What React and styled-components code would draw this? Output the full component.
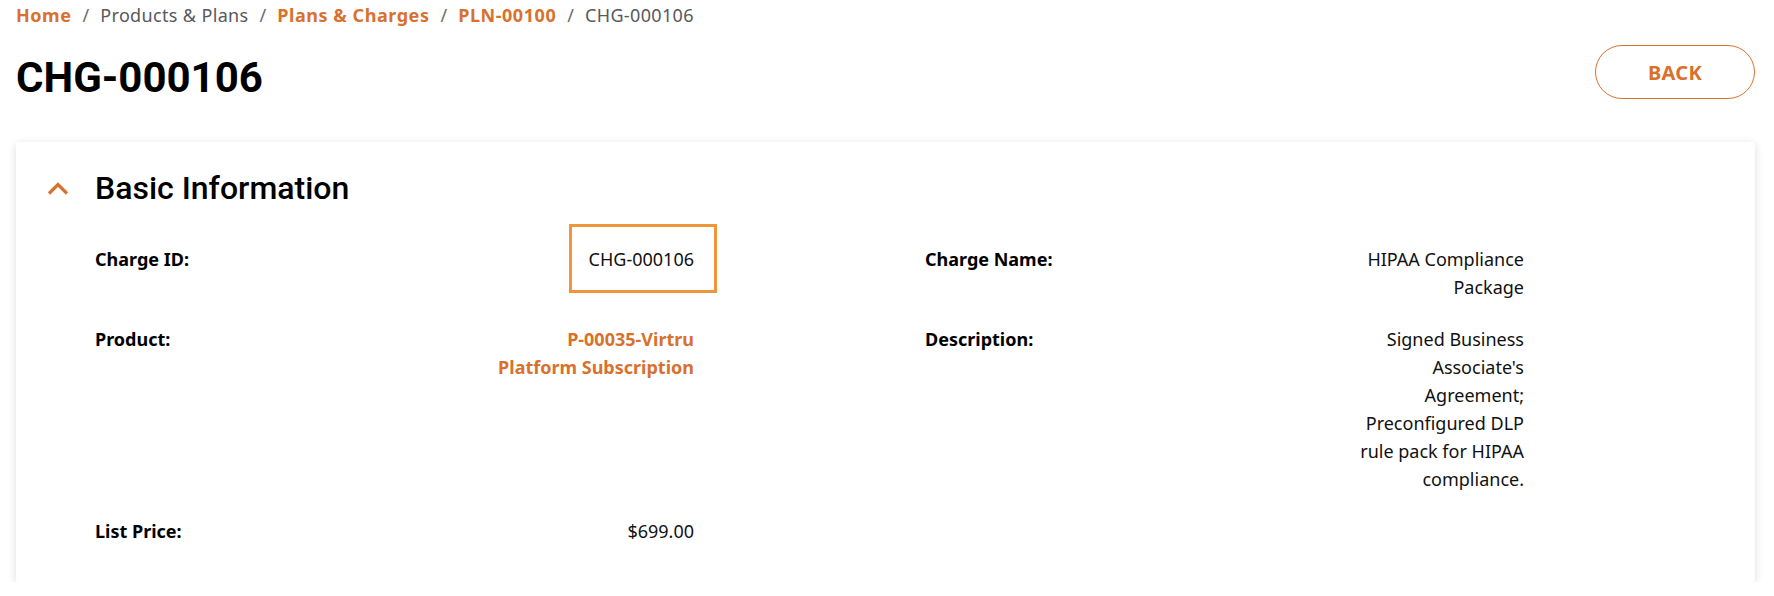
import styled, { createGlobalStyle } from 'styled-components';

const GlobalStyle = createGlobalStyle`
  body {
    margin: 0;
    background: #fff;
    font-family: 'Noto Sans', 'Open Sans', sans-serif;
    color: #111;
  }
`;

const Page = styled.div`
  padding: 1px 19px 0 16px;
`;

const Crumbs = styled.nav`
  display: flex;
  align-items: center;
  font-size: 18px;
  line-height: 28px;
  color: #58595b;
`;

const Crumb = styled.span`
  color: ${props => (props.link ? '#d9712e' : '#58595b')};
  font-weight: ${props => (props.link ? 700 : 400)};
  letter-spacing: ${props => (props.link ? '0.55px' : '0.35px')};
`;

const Sep = styled.span`
  margin: 0 11px;
  color: #6b6b6b;
`;

const TopRow = styled.div`
  display: flex;
  justify-content: space-between;
  align-items: flex-start;
  margin-top: 16px;
`;

const Title = styled.h1`
  margin: 8px 0 0;
  font-family: Roboto, sans-serif;
  font-size: 42px;
  font-weight: 700;
  line-height: normal;
  color: #000;
`;

const BackButton = styled.button`
  width: 160px;
  height: 54px;
  border: 1px solid #d9712e;
  border-radius: 27px;
  background: #fff;
  color: #d9712e;
  font-family: 'Noto Sans', sans-serif;
  font-size: 20px;
  font-weight: 700;
  letter-spacing: 0.3px;
  cursor: pointer;
`;

const Card = styled.section`
  margin-top: 40px;
  padding: 26px 0 37px;
  background: #fff;
  border-radius: 2px;
  box-shadow: 0 2px 8px rgba(0, 0, 0, 0.14);
`;

const SectionHead = styled.div`
  display: flex;
  align-items: center;
  gap: 17px;
  padding-left: 22px;
`;

const SectionTitle = styled.h2`
  margin: 0;
  font-family: Roboto, sans-serif;
  font-size: 32px;
  font-weight: 500;
  line-height: normal;
  color: #000;
`;

const Fields = styled.div`
  display: grid;
  grid-template-columns: 1fr 1fr;
  row-gap: 24px;
  margin-top: 37px;
  padding-left: 79px;
`;

const Field = styled.div`
  display: grid;
  grid-template-columns: 1fr ${props => props.valueWidth}px;
  padding-right: 231px;
  font-size: 18px;
  line-height: 28px;
`;

const Label = styled.div`
  font-weight: 700;
  color: #000;
`;

const Value = styled.div`
  text-align: right;
  color: ${props => (props.link ? '#d9712e' : '#111')};
  font-weight: ${props => (props.link ? 700 : 400)};
`;

const Highlight = styled.span`
  display: inline-block;
  padding: 18px 20px 17px 17px;
  margin: -21px -23px -20px -20px;
  border: 3px solid #f0963a;
`;

const Chevron = () => (
  <svg width="40" height="40" viewBox="0 0 40 40">
    <polyline points="11,25.5 20,16.5 29,25.5" fill="none" stroke="#d9712e" strokeWidth="3.2" />
  </svg>
);

const fields = [
  { label: 'Charge ID:', value: 'CHG-000106', boxed: true },
  { label: 'Charge Name:', value: 'HIPAA Compliance Package' },
  { label: 'Product:', value: 'P-00035-Virtru Platform Subscription', link: true },
  {
    label: 'Description:',
    value: "Signed Business Associate's Agreement; Preconfigured DLP rule pack for HIPAA compliance.",
  },
  { label: 'List Price:', value: '$699.00' },
];

export default function App() {
  return (
    <>
      <GlobalStyle />
      <Page>
        <Crumbs>
          <Crumb link>Home</Crumb>
          <Sep>/</Sep>
          <Crumb>Products &amp; Plans</Crumb>
          <Sep>/</Sep>
          <Crumb link>Plans &amp; Charges</Crumb>
          <Sep>/</Sep>
          <Crumb link>PLN-00100</Crumb>
          <Sep>/</Sep>
          <Crumb>CHG-000106</Crumb>
        </Crumbs>
        <TopRow>
          <Title>CHG-000106</Title>
          <BackButton>BACK</BackButton>
        </TopRow>
        <Card>
          <SectionHead>
            <Chevron />
            <SectionTitle>Basic Information</SectionTitle>
          </SectionHead>
          <Fields>
            {fields.map((f, i) => (
              <Field key={f.label} valueWidth={i % 2 ? 182 : 202}>
                <Label>{f.label}</Label>
                <Value link={f.link}>{f.boxed ? <Highlight>{f.value}</Highlight> : f.value}</Value>
              </Field>
            ))}
          </Fields>
        </Card>
      </Page>
    </>
  );
}
